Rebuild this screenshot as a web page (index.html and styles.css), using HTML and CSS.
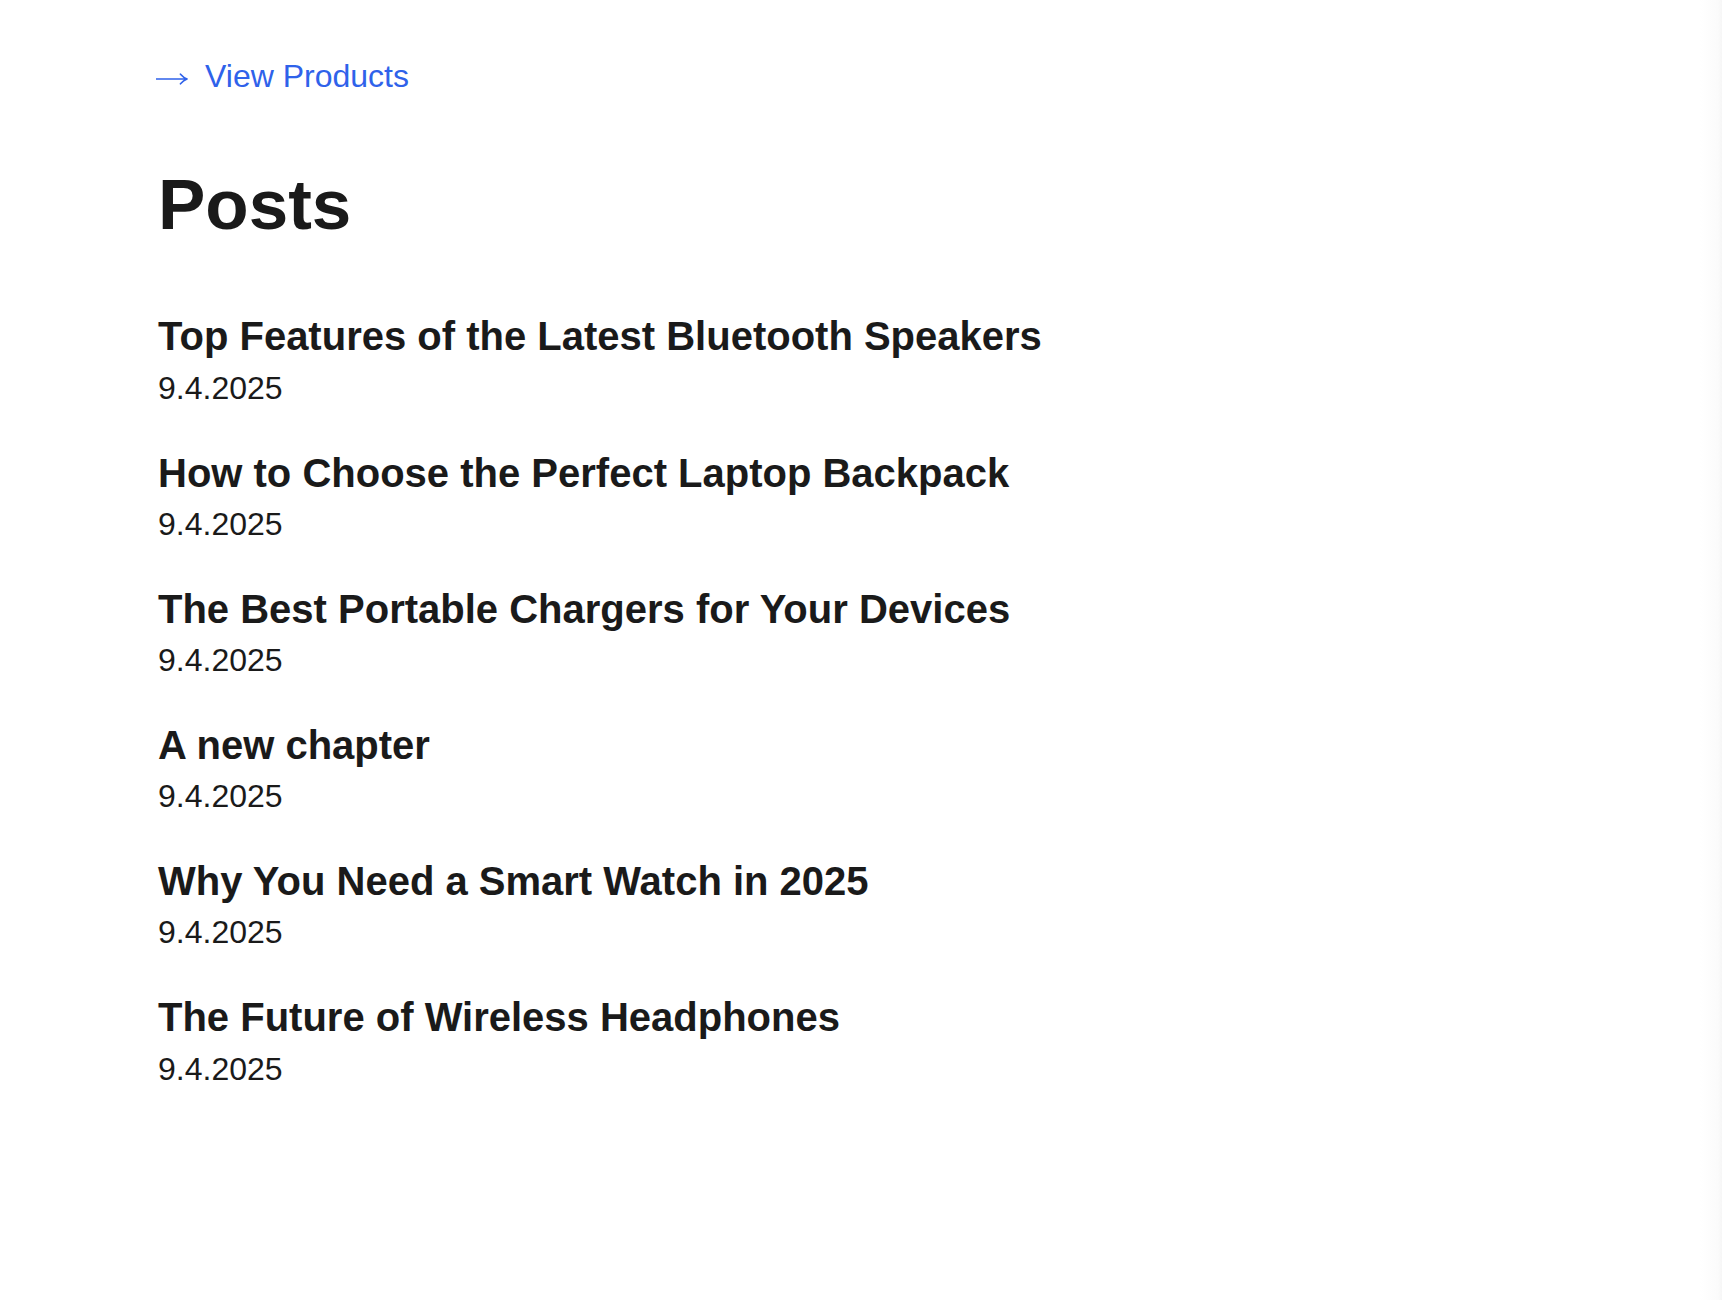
FILE: index.html
```html
<!DOCTYPE html>
<html lang="en">
<head>
<meta charset="utf-8">
<title>Posts</title>
<link rel="stylesheet" href="styles.css">
</head>
<body>
<main class="page">
  <a class="back" href="#"><svg class="arrow" width="32" height="12" viewBox="0 0 32 12" aria-hidden="true"><path d="M0.5 6H30.5M24.5 1.2Q27.5 4.6 31 6Q27.5 7.4 24.5 10.8" fill="none" stroke="currentColor" stroke-width="1.7" stroke-linecap="round" stroke-linejoin="round"/></svg>View Products</a>
  <h1 class="title">Posts</h1>
  <ul class="posts">
    <li class="post"><a class="post-title" href="#">Top Features of the Latest Bluetooth Speakers</a><span class="post-date">9.4.2025</span></li>
    <li class="post"><a class="post-title" href="#">How to Choose the Perfect Laptop Backpack</a><span class="post-date">9.4.2025</span></li>
    <li class="post"><a class="post-title" href="#">The Best Portable Chargers for Your Devices</a><span class="post-date">9.4.2025</span></li>
    <li class="post"><a class="post-title" href="#">A new chapter</a><span class="post-date">9.4.2025</span></li>
    <li class="post"><a class="post-title" href="#">Why You Need a Smart Watch in 2025</a><span class="post-date">9.4.2025</span></li>
    <li class="post"><a class="post-title" href="#">The Future of Wireless Headphones</a><span class="post-date">9.4.2025</span></li>
  </ul>
</main>
</body>
</html>
```

FILE: styles.css
```css
html {
  background: linear-gradient(to right, #ffffff calc(100% - 22px), #fbfbfb calc(100% - 4px), #f6f6f6 100%);
  min-height: 100%;
}
body {
  margin: 0;
  font-family: "Liberation Sans", Arial, sans-serif;
  color: #1a1a1a;
}
.page {
  padding: 57.4px 0 0 158px;
  display: flex;
  flex-direction: column;
  align-items: flex-start;
}
.back {
  display: flex;
  align-items: center;
  gap: 17px;
  font-size: 32px;
  line-height: 1.2;
  color: #2f62ea;
  text-decoration: none;
}
.arrow {
  flex: none;
  margin-left: -2px;
  margin-top: 5px;
}
.title {
  margin: 66.4px 0 0;
  font-size: 71px;
  line-height: 1.2;
  font-weight: 700;
}
.posts {
  list-style: none;
  margin: 65px 0 0;
  padding: 0;
  display: flex;
  flex-direction: column;
  gap: 41.4px;
}
.post {
  display: flex;
  flex-direction: column;
  gap: 8.4px;
}
.post-title {
  font-size: 40px;
  line-height: 1.2;
  font-weight: 700;
  color: #1a1a1a;
  text-decoration: none;
}
.post-date {
  font-size: 32px;
  line-height: 1.2;
}
```
